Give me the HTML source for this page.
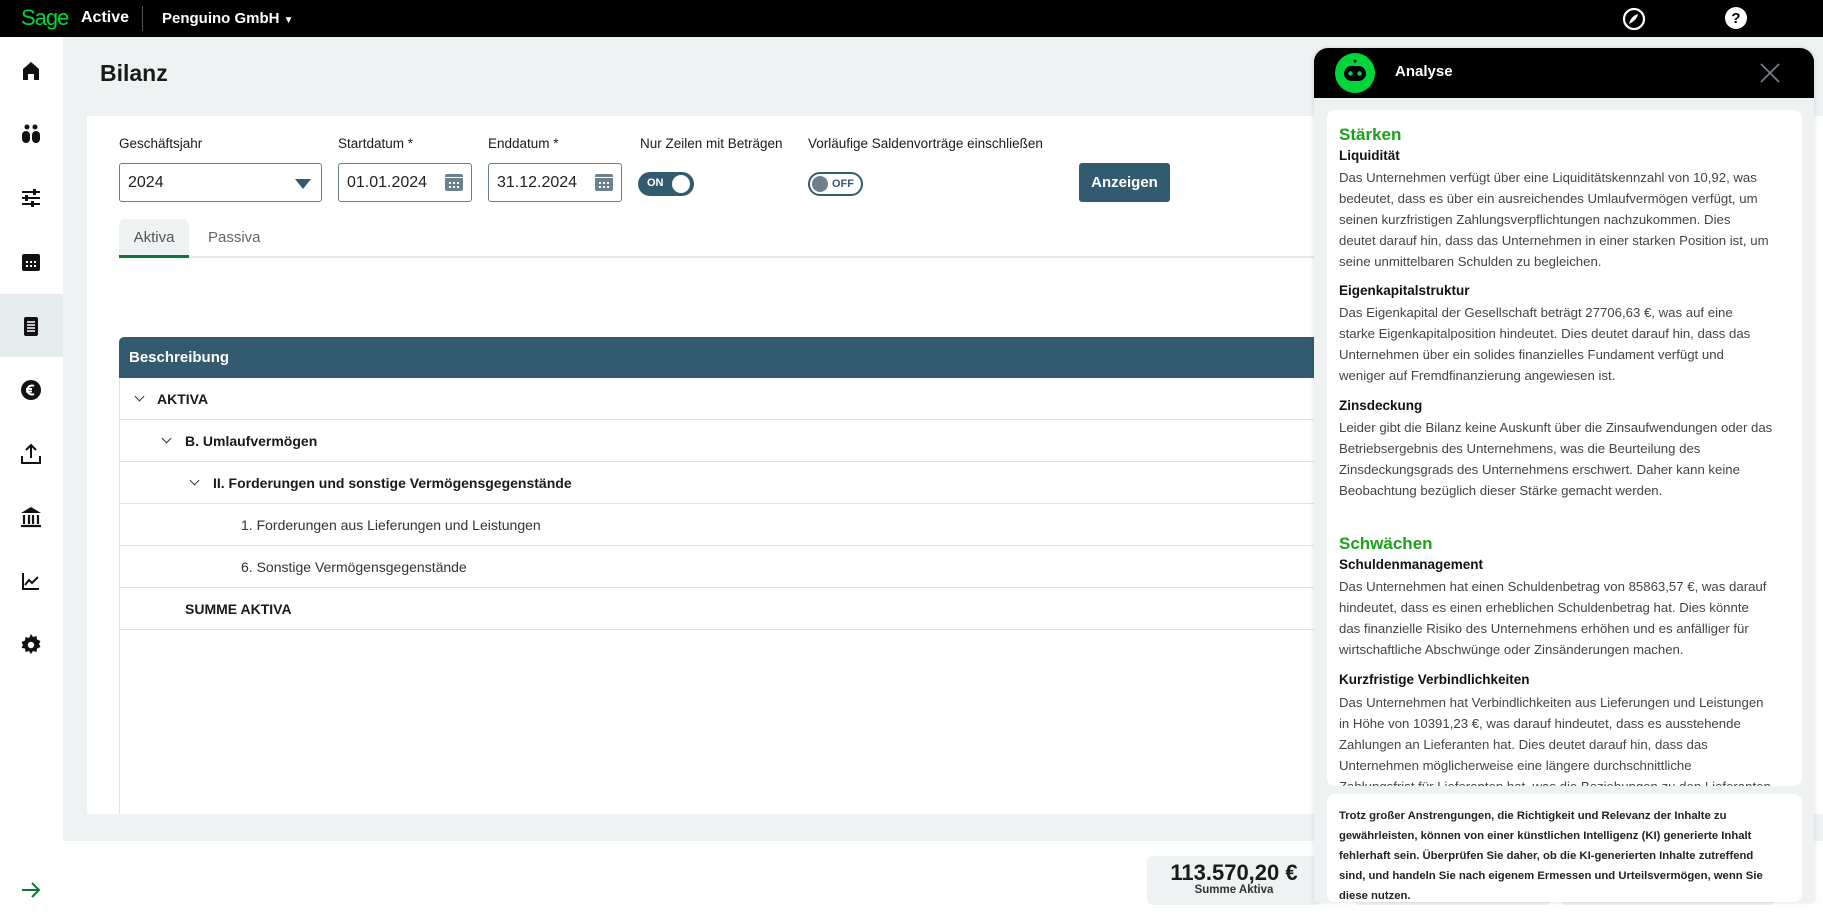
<!DOCTYPE html>
<html><head><meta charset="utf-8">
<style>
*{box-sizing:border-box;margin:0;padding:0}
body{width:1823px;height:920px;overflow:hidden;position:relative;background:#fff;font-family:"Liberation Sans",sans-serif;color:#1a1a1a}
.abs{position:absolute}
.top{left:0;top:0;width:1823px;height:37px;background:#000}
.side{left:0;top:37px;width:63px;height:883px;background:#fff}
.main{left:63px;top:37px;width:1760px;height:804px;background:#eef2f3}
.card{left:87px;top:116px;width:1736px;height:698px;background:#fff}
.lbl{font-size:13.5px;top:136px;color:#1a1a1a;white-space:nowrap}
.inp{top:163px;height:39px;border:1px solid #6b7f8a;border-radius:3px;font-size:16px;padding:10px 8px;color:#222}
.tog{height:24px;border-radius:12px;font-size:11px;font-weight:bold}
.row{left:119px;width:1300px;height:42px;border-bottom:1px solid #dde2e5;font-size:14px;line-height:42px}
.chev{display:inline-block;width:7px;height:7px;border-right:1.5px solid #333;border-bottom:1.5px solid #333;transform:rotate(45deg);position:absolute;top:15px}
.panel{left:1314px;top:48px;width:500px;height:854px;background:#eef2f3;border-radius:14px 14px 0 0;overflow:hidden;box-shadow:0 0 4px rgba(0,0,0,.15)}
.ph{left:0;top:0;width:500px;height:50px;background:#000}
.pc{left:13px;top:62px;width:475px;height:676px;background:#fff;border-radius:8px;overflow:hidden}
.pc .t{position:absolute;left:12px;white-space:nowrap;font-size:13.2px;color:#444;line-height:21px}
.pc h3{position:absolute;left:12px;font-size:17px;color:#1aa31a;font-weight:bold}
.pc h4{position:absolute;left:12px;font-size:13.5px;color:#111;font-weight:bold}
.disc{left:13px;top:746px;width:475px;height:108px;background:#fff;border-radius:8px;padding:12px 12px;font-size:11.3px;line-height:20px;font-weight:bold;color:#222;white-space:nowrap}
.sb{position:absolute;left:19px;width:24px;height:24px}
</style></head><body>
<div class="abs top"></div>
<div class="abs" style="left:21px;top:5px;font-size:22px;color:#00d639;letter-spacing:-1px">Sage</div>
<div class="abs" style="left:81px;top:9px;font-size:16px;color:#fff;font-weight:bold">Active</div>
<div class="abs" style="left:142px;top:6px;width:1px;height:25px;background:#555"></div>
<div class="abs" style="left:162px;top:10px;font-size:15px;color:#fff;font-weight:bold">Penguino GmbH <span style="font-size:10px">▼</span></div>
<svg class="abs" style="left:1622px;top:7px" width="24" height="24" viewBox="0 0 24 24"><circle cx="12" cy="12" r="10" fill="none" stroke="#fff" stroke-width="2.2"/><path d="M7 17 Q9 9 16 7 Q15 13 7 17Z" fill="#fff"/></svg>
<svg class="abs" style="left:1724px;top:6px" width="24" height="24" viewBox="0 0 24 24"><circle cx="12" cy="12" r="11" fill="#fff"/><text x="12" y="17" text-anchor="middle" font-family="Liberation Sans" font-weight="bold" font-size="15" fill="#000">?</text></svg>

<div class="abs side"></div>
<div class="abs" style="left:0;top:294px;width:63px;height:63px;background:#e6ebed"></div>
<svg class="sb" style="top:59px" viewBox="0 0 24 24"><path d="M4 21V10l8-7 8 7v11h-5v-6h-6v6z" fill="#111"/></svg>
<svg class="sb" style="top:122px" viewBox="0 0 24 24"><circle cx="8" cy="5" r="2.5" fill="#111"/><circle cx="16" cy="5" r="2.5" fill="#111"/><rect x="3" y="9" width="8" height="12" rx="4" fill="#111"/><rect x="13" y="9" width="8" height="12" rx="4" fill="#111"/></svg>
<svg class="sb" style="top:186px" viewBox="0 0 24 24"><path d="M3 6h18M3 12h18M3 18h18" stroke="#111" stroke-width="2"/><rect x="14" y="3" width="3" height="6" fill="#111"/><rect x="6" y="9" width="3" height="6" fill="#111"/><rect x="12" y="15" width="3" height="6" fill="#111"/></svg>
<svg class="sb" style="top:250px" viewBox="0 0 24 24"><rect x="3" y="4" width="18" height="17" rx="2" fill="#111"/><g fill="#fff"><rect x="7" y="11" width="2" height="2"/><rect x="11" y="11" width="2" height="2"/><rect x="15" y="11" width="2" height="2"/><rect x="7" y="15" width="2" height="2"/><rect x="11" y="15" width="2" height="2"/><rect x="15" y="15" width="2" height="2"/></g></svg>
<svg class="sb" style="top:314px" viewBox="0 0 24 24"><rect x="5" y="3" width="14" height="19" rx="2" fill="#111"/><path d="M8 8h8M8 11h8M8 14h8M8 17h8" stroke="#fff" stroke-width="1.5"/></svg>
<svg class="sb" style="top:378px" viewBox="0 0 24 24"><circle cx="12" cy="12" r="10" fill="#111"/><path d="M15 8a4.5 4.5 0 1 0 0 8M7 11h6M7 13.5h6" stroke="#fff" stroke-width="2" fill="none"/></svg>
<svg class="sb" style="top:442px" viewBox="0 0 24 24"><path d="M3 14v7h18v-7M12 16V3M7 8l5-5 5 5" stroke="#111" stroke-width="2" fill="none"/></svg>
<svg class="sb" style="top:505px" viewBox="0 0 24 24"><path d="M12 2 2 8h20z" fill="#111"/><path d="M5 10v9M10 10v9M14 10v9M19 10v9M2 21h20" stroke="#111" stroke-width="2.2"/></svg>
<svg class="sb" style="top:569px" viewBox="0 0 24 24"><path d="M4 4v16h16M6 16l4-5 3 3 6-6" stroke="#111" stroke-width="2" fill="none"/></svg>
<svg class="sb" style="top:633px" viewBox="0 0 24 24"><path d="M12 1l2 3 3.5-1 .5 3.5 3.5 1.5-1.5 3 1.5 3-3.5 1.5-.5 3.5-3.5-1-2 3-2-3-3.5 1-.5-3.5L2.5 15 4 12 2.5 9 6 7.5 6.5 4 10 5z" fill="#111"/><circle cx="12" cy="12" r="3.2" fill="#fff"/></svg>
<svg class="sb" style="top:878px" viewBox="0 0 24 24"><path d="M3 12h17M13 5l7 7-7 7" stroke="#0a7a32" stroke-width="2" fill="none"/></svg>

<div class="abs main"></div>
<div class="abs" style="left:100px;top:60px;font-size:23px;font-weight:bold;color:#1a1a1a">Bilanz</div>
<div class="abs card"></div>
<div class="abs lbl" style="left:119px">Geschäftsjahr</div>
<div class="abs lbl" style="left:338px">Startdatum *</div>
<div class="abs lbl" style="left:488px">Enddatum *</div>
<div class="abs lbl" style="left:640px">Nur Zeilen mit Beträgen</div>
<div class="abs lbl" style="left:808px">Vorläufige Saldenvorträge einschließen</div>
<div class="abs inp" style="left:119px;width:203px">2024<span style="position:absolute;right:10px;top:15px;width:0;height:0;border-left:8px solid transparent;border-right:8px solid transparent;border-top:10px solid #335b6f"></span></div>
<div class="abs inp" style="left:338px;width:134px">01.01.2024</div>
<div class="abs inp" style="left:488px;width:134px">31.12.2024</div>
<svg class="abs" style="left:444px;top:172px" width="20" height="20" viewBox="0 0 20 20"><rect x="1" y="2" width="18" height="17" rx="2" fill="#6d808c"/><rect x="1" y="5" width="18" height="1" fill="#fff"/><g fill="#fff"><rect x="5" y="10" width="2" height="2"/><rect x="9" y="10" width="2" height="2"/><rect x="13" y="10" width="2" height="2"/><rect x="5" y="14" width="2" height="2"/><rect x="9" y="14" width="2" height="2"/><rect x="13" y="14" width="2" height="2"/></g></svg>
<svg class="abs" style="left:594px;top:172px" width="20" height="20" viewBox="0 0 20 20"><rect x="1" y="2" width="18" height="17" rx="2" fill="#6d808c"/><rect x="1" y="5" width="18" height="1" fill="#fff"/><g fill="#fff"><rect x="5" y="10" width="2" height="2"/><rect x="9" y="10" width="2" height="2"/><rect x="13" y="10" width="2" height="2"/><rect x="5" y="14" width="2" height="2"/><rect x="9" y="14" width="2" height="2"/><rect x="13" y="14" width="2" height="2"/></g></svg>
<div class="abs tog" style="left:638px;top:172px;width:56px;background:#335b6f;color:#fff;padding:5px 9px">ON<span style="position:absolute;right:4px;top:3px;width:18px;height:18px;border-radius:50%;background:#fff"></span></div>
<div class="abs tog" style="left:808px;top:172px;width:55px;border:2px solid #335b6f;color:#335b6f;padding:4px 0 0 22px">OFF<span style="position:absolute;left:2px;top:2px;width:16px;height:16px;border-radius:50%;background:#6d808c"></span></div>
<div class="abs" style="left:1079px;top:163px;width:91px;height:39px;background:#335b6f;border-radius:3px;color:#fff;font-weight:bold;font-size:15px;text-align:center;line-height:39px">Anzeigen</div>
<div class="abs" style="left:119px;top:256px;width:1300px;height:2px;background:#e3e8ea"></div>
<div class="abs" style="left:119px;top:219px;width:70px;height:39px;background:#eef2f3;border-radius:6px 6px 0 0;border-bottom:3px solid #0a7a32;font-size:15px;color:#555;text-align:center;line-height:38px">Aktiva</div>
<div class="abs" style="left:208px;top:219px;font-size:15px;color:#666;line-height:38px">Passiva</div>

<div class="abs" style="left:119px;top:337px;width:1300px;height:41px;background:#335b6f;border-radius:5px 0 0 0;color:#fff;font-weight:bold;font-size:15px;line-height:41px;padding-left:10px">Beschreibung</div>
<div class="abs" style="left:119px;top:378px;width:1px;height:436px;background:#dde2e5"></div>
<div class="abs row" style="top:378px"><span class="chev" style="left:17px"></span><b style="position:absolute;left:38px;font-weight:600">AKTIVA</b></div>
<div class="abs row" style="top:420px"><span class="chev" style="left:44px"></span><b style="position:absolute;left:66px">B. Umlaufvermögen</b></div>
<div class="abs row" style="top:462px"><span class="chev" style="left:72px"></span><b style="position:absolute;left:94px">II. Forderungen und sonstige Vermögensgegenstände</b></div>
<div class="abs row" style="top:504px"><span style="position:absolute;left:122px;color:#333">1. Forderungen aus Lieferungen und Leistungen</span></div>
<div class="abs row" style="top:546px"><span style="position:absolute;left:122px;color:#333">6. Sonstige Vermögensgegenstände</span></div>
<div class="abs row" style="top:588px"><b style="position:absolute;left:66px">SUMME AKTIVA</b></div>

<div class="abs" style="left:1147px;top:856px;width:174px;height:49px;background:#eef2f3;border-radius:6px;text-align:center"><div style="font-size:22px;font-weight:bold;margin-top:6px;line-height:22px">113.570,20 €</div><div style="font-size:11.5px;font-weight:bold;color:#333">Summe Aktiva</div></div>
<div class="abs" style="left:1354px;top:856px;width:197px;height:49px;background:#eef2f3;border-radius:6px"></div>
<div class="abs" style="left:1560px;top:856px;width:215px;height:49px;background:#eef2f3;border-radius:6px"></div>

<div class="abs panel">
 <div class="abs ph"></div>
 <svg class="abs" style="left:21px;top:5px" width="40" height="40" viewBox="0 0 40 40"><circle cx="20" cy="20" r="20" fill="#00d639"/><rect x="9" y="13" width="22" height="15" rx="7.5" fill="#000"/><circle cx="15.5" cy="20.5" r="2.2" fill="#00d639"/><circle cx="24.5" cy="20.5" r="2.2" fill="#00d639"/><circle cx="20" cy="8" r="1.5" fill="#000"/></svg>
 <div class="abs" style="left:81px;top:15px;color:#fff;font-weight:bold;font-size:15px">Analyse</div>
 <svg class="abs" style="left:446px;top:15px" width="20" height="20" viewBox="0 0 20 20"><path d="M1 1l18 18M19 1 1 19" stroke="#6d808c" stroke-width="1.8"/></svg>
 <div class="abs pc">
  <h3 style="top:15px">Stärken</h3>
  <h4 style="top:38px">Liquidität</h4>
  <div class="t" style="top:57px">Das Unternehmen verfügt über eine Liquiditätskennzahl von 10,92, was<br>bedeutet, dass es über ein ausreichendes Umlaufvermögen verfügt, um<br>seinen kurzfristigen Zahlungsverpflichtungen nachzukommen. Dies<br>deutet darauf hin, dass das Unternehmen in einer starken Position ist, um<br>seine unmittelbaren Schulden zu begleichen.</div>
  <h4 style="top:173px">Eigenkapitalstruktur</h4>
  <div class="t" style="top:192px">Das Eigenkapital der Gesellschaft beträgt 27706,63 €, was auf eine<br>starke Eigenkapitalposition hindeutet. Dies deutet darauf hin, dass das<br>Unternehmen über ein solides finanzielles Fundament verfügt und<br>weniger auf Fremdfinanzierung angewiesen ist.</div>
  <h4 style="top:288px">Zinsdeckung</h4>
  <div class="t" style="top:307px">Leider gibt die Bilanz keine Auskunft über die Zinsaufwendungen oder das<br>Betriebsergebnis des Unternehmens, was die Beurteilung des<br>Zinsdeckungsgrads des Unternehmens erschwert. Daher kann keine<br>Beobachtung bezüglich dieser Stärke gemacht werden.</div>
  <h3 style="top:424px">Schwächen</h3>
  <h4 style="top:447px">Schuldenmanagement</h4>
  <div class="t" style="top:466px">Das Unternehmen hat einen Schuldenbetrag von 85863,57 €, was darauf<br>hindeutet, dass es einen erheblichen Schuldenbetrag hat. Dies könnte<br>das finanzielle Risiko des Unternehmens erhöhen und es anfälliger für<br>wirtschaftliche Abschwünge oder Zinsänderungen machen.</div>
  <h4 style="top:562px">Kurzfristige Verbindlichkeiten</h4>
  <div class="t" style="top:582px">Das Unternehmen hat Verbindlichkeiten aus Lieferungen und Leistungen<br>in Höhe von 10391,23 €, was darauf hindeutet, dass es ausstehende<br>Zahlungen an Lieferanten hat. Dies deutet darauf hin, dass das<br>Unternehmen möglicherweise eine längere durchschnittliche<br>Zahlungsfrist für Lieferanten hat, was die Beziehungen zu den Lieferanten</div>
 </div>
 <div class="abs disc">Trotz großer Anstrengungen, die Richtigkeit und Relevanz der Inhalte zu<br>gewährleisten, können von einer künstlichen Intelligenz (KI) generierte Inhalt<br>fehlerhaft sein. Überprüfen Sie daher, ob die KI-generierten Inhalte zutreffend<br>sind, und handeln Sie nach eigenem Ermessen und Urteilsvermögen, wenn Sie<br>diese nutzen.</div>
</div>
</body></html>
